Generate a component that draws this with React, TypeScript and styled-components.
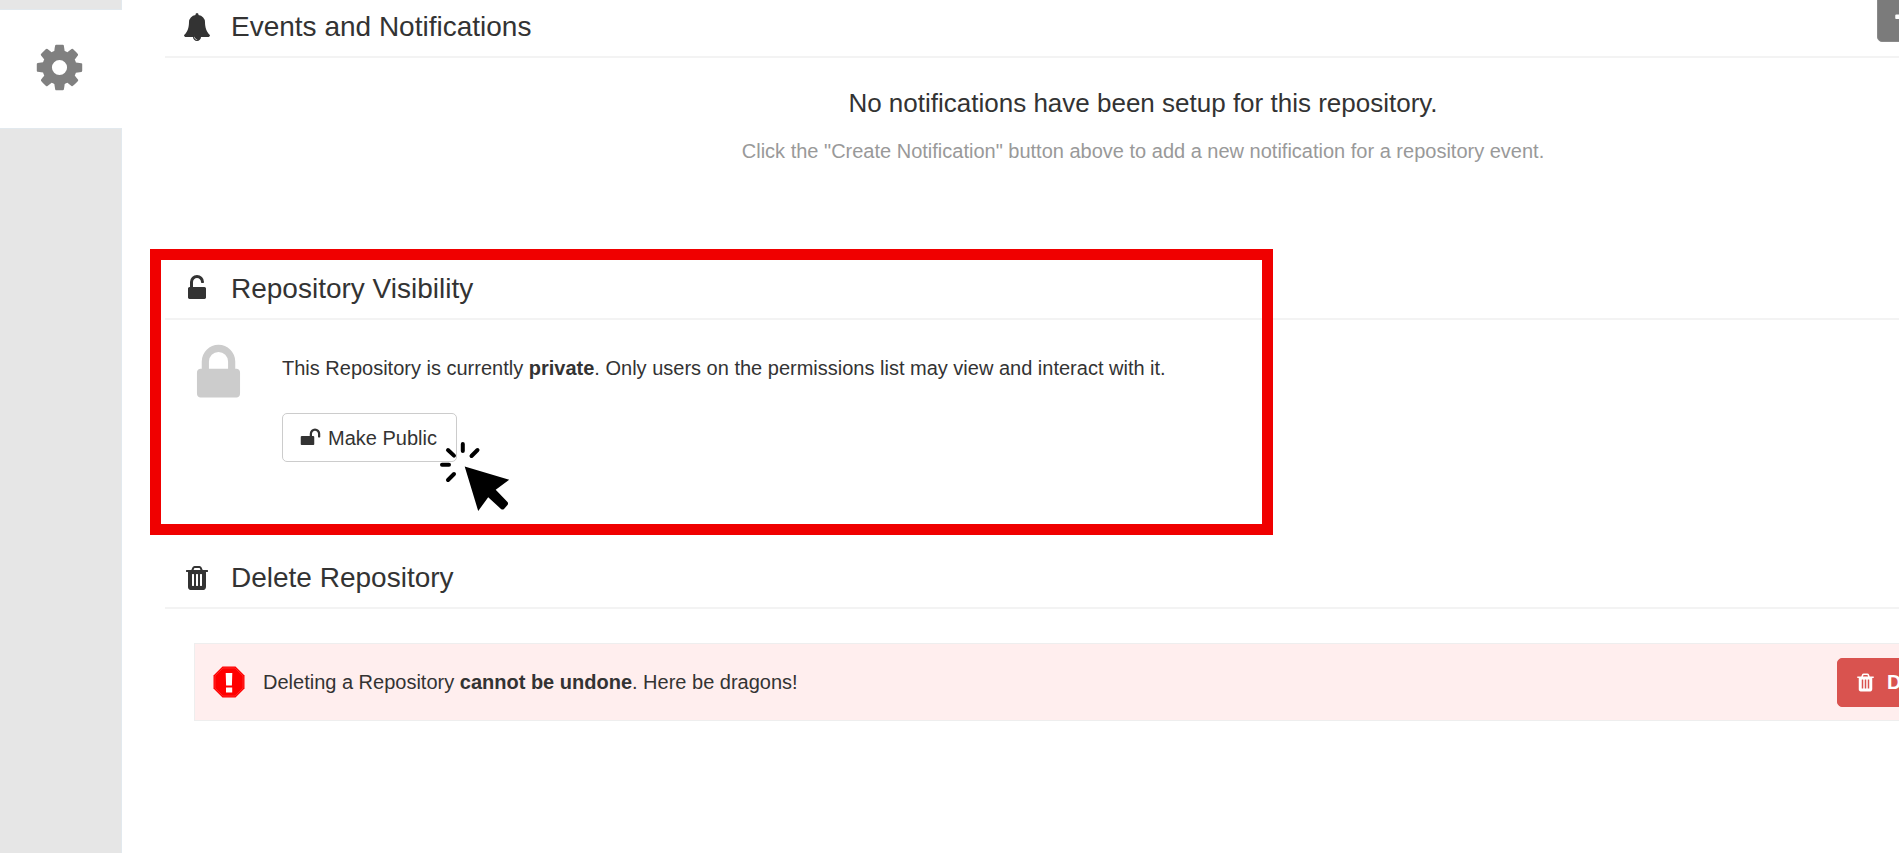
import React from "react";
import styled, { createGlobalStyle } from "styled-components";

const GlobalStyle = createGlobalStyle`
  *, *::before, *::after { box-sizing: border-box; }
  html, body { margin: 0; background: #fff; }
  body {
    font-family: "Liberation Sans", Arial, sans-serif;
    font-size: 20px;
    line-height: 30px;
    color: #333;
    overflow: hidden;
  }
  h2, h3, p { margin: 0; font-weight: 400; }
`;

const Page = styled.div`
  display: flex;
  min-height: 100vh;
  overflow: hidden;
`;

const Sidebar = styled.nav`
  flex: 0 0 122px;
  padding-top: 9px;
  background: #e6e6e6;
  border-right: 1px solid #e2e9ee;
`;

const SidebarTab = styled.a`
  display: flex;
  align-items: center;
  height: 120px;
  padding-left: 33px;
  margin-right: -1px;
  padding-bottom: 4px;
  background: #fff;
  border-top: 1px solid #e2e9ee;
  border-bottom: 1px solid #e2e9ee;
  color: #808080;
`;

/* The settings column runs past the right edge of the window. */
const Main = styled.main`
  flex: 1 0 auto;
  width: calc(100% - 122px);
  padding-left: 43px;
  margin-right: -222px;
`;

const Section = styled.section<{ $space?: number }>`
  position: relative;
  padding-bottom: ${(p) => p.$space ?? 0}px;
`;

const SectionHeader = styled.header`
  display: flex;
  align-items: flex-start;
  padding: 10px 20px 12px 18px;
  border-bottom: 2px solid #f3f3f3;
`;

const SectionTitle = styled.h2`
  display: flex;
  align-items: center;
  gap: 20px;
  flex: 1;
  font-size: 28px;
  line-height: 34px;
`;

const Button = styled.button<{ $kind: "default" | "dark" | "danger" }>`
  display: inline-flex;
  align-items: center;
  justify-content: flex-start;
  gap: ${(p) => (p.$kind === "danger" ? 11 : 7)}px;
  height: 49px;
  padding: 0 19px 0 17px;
  border: 1px solid
    ${(p) => ({ default: "#ccc", dark: "#8a8a8a", danger: "#d9534f" })[p.$kind]};
  border-radius: 5px;
  background: ${(p) => ({ default: "#fff", dark: "#7b7b7b", danger: "#d9534f" })[p.$kind]};
  color: ${(p) => (p.$kind === "default" ? "#333" : "#fff")};
  font: inherit;
  font-weight: ${(p) => (p.$kind === "danger" ? 700 : 400)};
  white-space: nowrap;
  cursor: pointer;
`;

const CreateButton = styled(Button)`
  width: 224px;
  margin: -17px 0;
  padding-left: 15px;
`;

const EmptyState = styled.div`
  padding: 29px 0 0;
  text-align: center;
`;

const EmptyTitle = styled.h3`
  font-size: 26px;
  line-height: 32px;
`;

const EmptyHint = styled.p`
  margin-top: 17px;
  color: #999;
`;

const Visibility = styled.div`
  display: flex;
  align-items: flex-start;
  gap: 30px;
  padding: 20px 0 0 20px;
`;

const VisibilityBody = styled.div`
  display: flex;
  flex-direction: column;
  align-items: flex-start;
  gap: 30px;
  padding-top: 13px;
`;

const LockMark = styled.div`
  display: flex;
  color: #ccc;
`;

const Highlight = styled.div`
  position: absolute;
  top: -13px;
  left: -15px;
  width: 1123px;
  height: 286px;
  border: 11px solid #f00000;
  pointer-events: none;
`;

const Pointer = styled.svg`
  position: absolute;
  top: 180px;
  left: 274px;
  width: 72px;
  height: 72px;
  pointer-events: none;
`;

const Alert = styled.div`
  display: flex;
  align-items: center;
  gap: 18px;
  height: 78px;
  margin: 34px 29px 0;
  padding: 0 16px 0 18px;
  border: 1px solid #eee;
  background: #fee;
`;

const AlertText = styled.p`
  flex: 1;
`;

const DeleteButton = styled(Button)`
  width: 238px;
`;

const Glyph = styled.svg<{ $size: number }>`
  flex: none;
  display: block;
  width: ${(p) => p.$size}px;
  height: ${(p) => p.$size}px;
  fill: currentColor;
`;

const icons = {
  cog: "M1152 896q0-106-75-181t-181-75-181 75-75 181 75 181 181 75 181-75 75-181zm512-109v222q0 12-8 23t-20 13l-185 28q-19 54-39 91 35 50 107 138 10 12 10 25t-9 23q-27 37-99 108t-94 71q-12 0-26-9l-138-108q-44 23-91 38-16 136-29 186-7 28-36 28h-222q-14 0-24.5-8.5t-11.5-21.5l-28-184q-49-16-90-37l-141 107q-10 9-25 9-14 0-25-11-126-114-165-168-7-10-7-23 0-12 8-23 15-21 51-66.5t54-70.5q-27-50-41-99l-183-27q-13-2-21-12.5t-8-23.5v-222q0-12 8-23t19-13l186-28q14-46 39-92-40-57-107-138-10-12-10-24 0-10 9-23 26-36 98.5-107.5t94.5-71.5q13 0 26 10l138 107q44-23 91-38 16-136 29-186 7-28 36-28h222q14 0 24.5 8.5t11.5 21.5l28 184q49 16 90 37l142-107q9-9 24-9 13 0 25 10 129 119 165 170 7 8 7 22 0 12-8 23-15 21-51 66.5t-54 70.5q26 50 41 98l183 28q13 2 21 12.5t8 23.5z",
  bell: "M912 1696q0-16-16-16-59 0-101.5-42.5t-42.5-101.5q0-16-16-16t-16 16q0 73 51.5 124.5t124.5 51.5q16 0 16-16zm816-288q0 52-38 90t-90 38h-448q0 106-75 181t-181 75-181-75-75-181h-448q-52 0-90-38t-38-90q50-42 91-88t85-119.5 74.5-158.5 50-206 19.5-260q0-152 117-282.5t307-158.5q-8-19-8-39 0-40 28-68t68-28 68 28 28 68q0 20-8 39 190 28 307 158.5t117 282.5q0 139 19.5 260t50 206 74.5 158.5 85 119.5 91 88z",
  unlockAlt:
    "M1376 768q40 0 68 28t28 68v576q0 40-28 68t-68 28h-960q-40 0-68-28t-28-68v-576q0-40 28-68t68-28h32v-320q0-185 131.5-316.5t316.5-131.5 316.5 131.5 131.5 316.5q0 26-19 45t-45 19h-64q-26 0-45-19t-19-45q0-106-75-181t-181-75-181 75-75 181v320h736z",
  unlock:
    "M1728 576v256q0 26-19 45t-45 19h-64q-26 0-45-19t-19-45v-256q0-106-75-181t-181-75-181 75-75 181v192h96q40 0 68 28t28 68v576q0 40-28 68t-68 28h-960q-40 0-68-28t-28-68v-576q0-40 28-68t68-28h672v-192q0-185 131.5-316.5t316.5-131.5 316.5 131.5 131.5 316.5z",
  lock: "M640 768h512v-192q0-106-75-181t-181-75-181 75-75 181v192zm832 96v576q0 40-28 68t-68 28h-960q-40 0-68-28t-28-68v-576q0-40 28-68t68-28h32v-192q0-184 132-316t316-132 316 132 132 316v192h32q40 0 68 28t28 68z",
  trash:
    "M704 1376v-704q0-14-9-23t-23-9h-64q-14 0-23 9t-9 23v704q0 14 9 23t23 9h64q14 0 23-9t9-23zm256 0v-704q0-14-9-23t-23-9h-64q-14 0-23 9t-9 23v704q0 14 9 23t23 9h64q14 0 23-9t9-23zm256 0v-704q0-14-9-23t-23-9h-64q-14 0-23 9t-9 23v704q0 14 9 23t23 9h64q14 0 23-9t9-23zm-544-992h448l-48-117q-7-9-17-11h-317q-10 2-17 11zm928 32v64q0 14-9 23t-23 9h-96v948q0 83-47 143.5t-113 60.5h-832q-66 0-113-58.5t-47-141.5v-952h-96q-14 0-23-9t-9-23v-64q0-14 9-23t23-9h309l70-167q15-37 54-63t79-26h320q40 0 79 26t54 63l70 167h309q14 0 23 9t9 23z",
  plus: "M1600 736v192q0 40-28 68t-68 28h-416v416q0 40-28 68t-68 28h-192q-40 0-68-28t-28-68v-416h-416q-40 0-68-28t-28-68v-192q0-40 28-68t68-28h416v-416q0-40 28-68t68-28h192q40 0 68 28t28 68v416h416q40 0 68 28t28 68z",
};

function Icon({ name, size }: { name: keyof typeof icons; size: number }) {
  return (
    <Glyph $size={size} viewBox="0 0 1792 1792" aria-hidden="true">
      <path d={icons[name]} />
    </Glyph>
  );
}

function StopIcon() {
  return (
    <Glyph $size={32} viewBox="0 0 32 32" aria-hidden="true">
      <path d="M9.5 0.5h13l9 9v13l-9 9h-13l-9-9v-13z" fill="#f00" />
      <path
        d="M10 2h12l8 8v12l-8 8H10l-8-8V10z"
        fill="none"
        stroke="#ff4d4d"
        strokeWidth="0.5"
      />
      <path d="M12.700 7h6.600l-.4 12.500h-5.800zM13 21.500h6.200v5H13z" fill="#fff" />
    </Glyph>
  );
}

function ClickPointer() {
  return (
    <Pointer viewBox="0 0 72 72" aria-hidden="true">
      <g stroke="#000" strokeWidth="4" strokeLinecap="round">
        <path d="M23.8 2v7M9 8l6 5.600M38.500 8l-6 6M3 22.700h7M15 32l-6 6" fill="none" />
      </g>
      <path d="M25.700 24.500L70.200 37.700 56.700 47.700 68.500 60Q69.700 61.500 68.500 63L65 67Q63.500 68.200 62 67L49.200 55.200 39.200 69z" />
    </Pointer>
  );
}

export default function App() {
  return (
    <>
      <GlobalStyle />
      <Page>
        <Sidebar>
          <SidebarTab href="#settings" aria-label="Settings">
            <Icon name="cog" size={53} />
          </SidebarTab>
        </Sidebar>
        <Main>
          <Section $space={96}>
            <SectionHeader>
              <SectionTitle>
                <Icon name="bell" size={28} />
                Events and Notifications
              </SectionTitle>
              <CreateButton type="button" $kind="dark" aria-label="Create Notification">
                <Icon name="plus" size={21} />
              </CreateButton>
            </SectionHeader>
            <EmptyState>
              <EmptyTitle>No notifications have been setup for this repository.</EmptyTitle>
              <EmptyHint>
                Click the "Create Notification" button above to add a new notification for a
                repository event.
              </EmptyHint>
            </EmptyState>
          </Section>

          <Section $space={89}>
            <SectionHeader>
              <SectionTitle>
                <Icon name="unlockAlt" size={28} />
                Repository Visibility
              </SectionTitle>
            </SectionHeader>
            <Visibility>
              <LockMark>
                <Icon name="lock" size={67} />
              </LockMark>
              <VisibilityBody>
                <p>
                  This Repository is currently <strong>private</strong>. Only users on the
                  permissions list may view and interact with it.
                </p>
                <Button type="button" $kind="default">
                  <Icon name="unlock" size={21} />
                  Make Public
                </Button>
              </VisibilityBody>
            </Visibility>
            <Highlight />
            <ClickPointer />
          </Section>

          <Section>
            <SectionHeader>
              <SectionTitle>
                <Icon name="trash" size={28} />
                Delete Repository
              </SectionTitle>
            </SectionHeader>
            <Alert role="alert">
              <StopIcon />
              <AlertText>
                Deleting a Repository <strong>cannot be undone</strong>. Here be dragons!
              </AlertText>
              <DeleteButton type="button" $kind="danger">
                <Icon name="trash" size={21} />
                Delete
              </DeleteButton>
            </Alert>
          </Section>
        </Main>
      </Page>
    </>
  );
}
